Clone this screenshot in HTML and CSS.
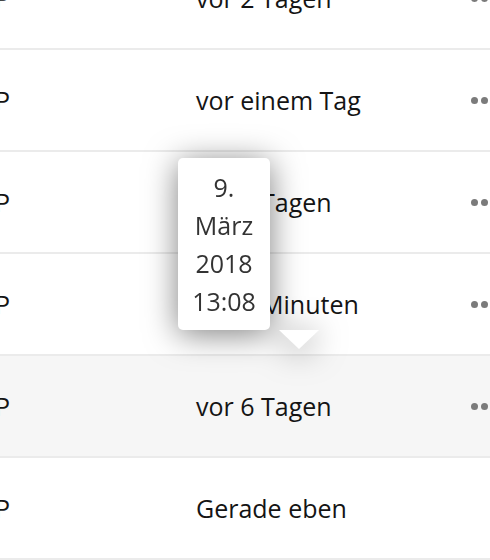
FILE: index.html
```html
<!DOCTYPE html>
<html>
  <head>
    <meta charset="UTF-8" />
    <title>Dateien</title>
    <link rel="stylesheet" href="styles.css">
  </head>
  <body>
    <ul class="file-list">
      <li class="row">
        <span class="name">P</span>
        <span class="date">vor 2 Tagen</span>
        <span class="actions"><i></i><i></i><i></i></span>
      </li>
      <li class="row">
        <span class="name">P</span>
        <span class="date">vor einem Tag</span>
        <span class="actions"><i></i><i></i><i></i></span>
      </li>
      <li class="row">
        <span class="name">P</span>
        <span class="date">vor 3 Tagen</span>
        <span class="actions"><i></i><i></i><i></i></span>
      </li>
      <li class="row">
        <span class="name">P</span>
        <span class="date">vor 5 Minuten</span>
        <span class="actions"><i></i><i></i><i></i></span>
      </li>
      <li class="row hover">
        <span class="name">P</span>
        <span class="date">vor 6 Tagen</span>
        <span class="actions"><i></i><i></i><i></i></span>
      </li>
      <li class="row">
        <span class="name">P</span>
        <span class="date">Gerade eben</span>
        <span class="actions"></span>
      </li>
    </ul>

    <!-- tooltip for the date column -->
    <div class="tooltip">
      <div class="tooltip-box">9.<br>März<br>2018<br>13:08</div>
      <div class="tooltip-arrow"></div>
    </div>
  </body>
</html>
```

FILE: styles.css
```css
body {
  margin: 0;
  overflow: hidden;
  font-family: "Open Sans", "DejaVu Sans", sans-serif;
  color: #141414;
  background: #ffffff;
}

.file-list {
  list-style: none;
  margin: -52px 0 0 0;
  padding: 0;
}

.row {
  display: flex;
  align-items: center;
  height: 100px;
  border-bottom: 2px solid #ebebeb;
  font-size: 25px;
}

.hover {
  background: #f6f6f6;
}

.name {
  width: 196px;
  flex-shrink: 0;
  text-indent: -5px;
  overflow: hidden;
  white-space: nowrap;
}

.date {
  flex: 1;
  white-space: nowrap;
}

.actions {
  display: flex;
  gap: 3px;
  width: 19px;
  flex-shrink: 0;
  overflow: hidden;
}

.actions i {
  display: block;
  flex-shrink: 0;
  width: 7px;
  height: 7px;
  border-radius: 50%;
  background: #7b7b7b;
}

.tooltip {
  position: absolute;
  left: 178px;
  top: 158px;
  filter: drop-shadow(0 4px 16px rgba(0, 0, 0, 0.5));
}

.tooltip-box {
  width: 92px;
  padding: 10px 0;
  background: #ffffff;
  border-radius: 5px;
  text-align: center;
  font-size: 25px;
  line-height: 38px;
  color: #333333;
}

.tooltip-arrow {
  width: 0;
  height: 0;
  margin-left: 101px;
  border-left: 20px solid transparent;
  border-right: 20px solid transparent;
  border-top: 19px solid #ffffff;
}
```
